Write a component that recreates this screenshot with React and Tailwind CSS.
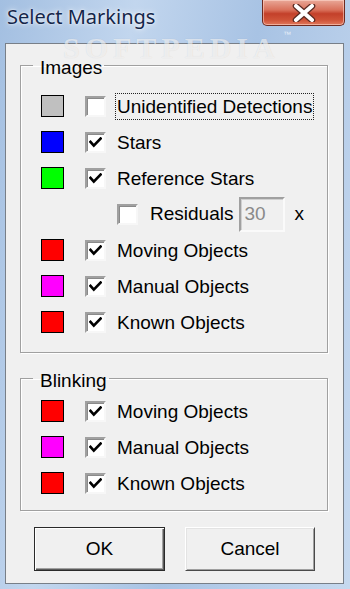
import React from "react";

function Check({ checked }) {
  return (
    <span className="w-[21px] h-[21px] shrink-0 bg-white border-2 border-t-[#a0a0a0] border-l-[#a0a0a0] border-b-[#f7f7f7] border-r-[#f7f7f7] shadow-[inset_1px_1px_0_#8a8a8a] flex items-center justify-center">
      {checked && (
        <svg width="13" height="11" viewBox="0 0 13 11">
          <path d="M1.5 5 L4.8 8.6 L11.6 1.6" fill="none" stroke="#000" strokeWidth="2.7" strokeLinecap="square" />
        </svg>
      )}
    </span>
  );
}

function Row({ color, checked, label, focus }) {
  return (
    <div className="h-[36px] flex items-center">
      <span className="w-[23px] h-[22px] shrink-0 border border-black" style={{ backgroundColor: color }} />
      <span className="ml-[21px] flex">
        <Check checked={checked} />
      </span>
      <span
        className={
          "ml-[9px] px-[1px] leading-[25px] border border-dotted whitespace-nowrap " +
          (focus ? "border-[#222]" : "border-transparent")
        }
      >
        {label}
      </span>
    </div>
  );
}

function Group({ title, children, className }) {
  return (
    <fieldset
      className={
        "border border-[#a0a0a0] shadow-[inset_1px_1px_0_#fff,1px_1px_0_#fff] ml-[14px] mr-[15px] pl-[20px] pr-0 " +
        className
      }
    >
      <legend className="-ml-[8px] pl-[7px] pr-[2px] pt-[5px] leading-[22px]">{title}</legend>
      {children}
    </fieldset>
  );
}

export default function App() {
  return (
    <div className="relative w-[350px] h-[589px] overflow-hidden flex flex-col bg-[linear-gradient(100deg,#a3bfe1_0%,#c2d6ee_30%,#a8c3e4_58%,#b9cfea_80%,#c6d9ef_100%)] font-['Liberation_Sans',Arial,sans-serif] text-[19px] text-black">
      {/* Title bar */}
      <div className="h-[43px] shrink-0 flex items-start justify-between">
        <div className="pl-[7px] pt-[4px] leading-[26px] text-[20px] text-[#14264a] font-['Noto_Sans','Open_Sans',sans-serif] [text-shadow:0_0_6px_rgba(255,255,255,0.95),0_0_2px_rgba(255,255,255,0.9)]">
          Select Markings
        </div>
        <div className="mr-[5px] w-[83px] h-[26px] rounded-b-[5px] border border-t-0 border-[#6e2a20] bg-[linear-gradient(180deg,#e9a898_0%,#d9705a_40%,#c3402a_55%,#cf5338_80%,#e0785c_100%)] shadow-[inset_0_0_0_1px_rgba(255,220,210,0.55)] flex items-center justify-center">
          <svg width="24" height="18" viewBox="0 0 24 18">
            <path d="M4 2 L20 16 M20 2 L4 16" stroke="#5a2a22" strokeWidth="6.5" strokeLinecap="round" />
            <path d="M4 2 L20 16 M20 2 L4 16" stroke="#fff" strokeWidth="4" strokeLinecap="round" />
          </svg>
        </div>
      </div>

      {/* Client area */}
      <div className="mx-[5px] mr-[6px] mb-[5px] flex-1 border border-[#787f88] bg-[#f0f0f0] flex flex-col">
        <Group title="Images" className="mt-[8px] pt-[9px] pb-[12px]">
          <Row color="#c0c0c0" checked={false} label="Unidentified Detections" focus />
          <Row color="#0000ff" checked label="Stars" />
          <Row color="#00ff00" checked label="Reference Stars" />
          <div className="h-[36px] flex items-center">
            <span className="ml-[76px] flex">
              <Check checked={false} />
            </span>
            <span className="ml-[12px] whitespace-nowrap">Residuals</span>
            <span className="ml-[6px] w-[46px] h-[35px] shrink-0 bg-[#f0f0f0] border-2 border-t-[#a0a0a0] border-l-[#a0a0a0] border-b-[#fafafa] border-r-[#fafafa] shadow-[inset_1px_1px_0_#d0d0d0] pl-[3px] flex items-center text-[#8a8a8a]">
              30
            </span>
            <span className="ml-[9px]">x</span>
          </div>
          <Row color="#ff0000" checked label="Moving Objects" />
          <Row color="#ff00ff" checked label="Manual Objects" />
          <Row color="#ff0000" checked label="Known Objects" />
        </Group>

        <Group title="Blinking" className="mt-[12px] pt-[1px] pb-[9px]">
          <Row color="#ff0000" checked label="Moving Objects" />
          <Row color="#ff00ff" checked label="Manual Objects" />
          <Row color="#ff0000" checked label="Known Objects" />
        </Group>

        <div className="mt-[16px] ml-[28px] flex gap-[20px]">
          <button className="w-[131px] h-[44px] border border-[#2a2a2a] bg-[#f0f0f0] shadow-[inset_1px_1px_0_#fff,inset_-1px_-1px_0_#5a5a5a,inset_-2px_-2px_0_#a0a0a0] flex items-center justify-center">
            OK
          </button>
          <button className="w-[130px] h-[44px] border border-t-[#fff] border-l-[#fff] border-b-[#4a4a4a] border-r-[#4a4a4a] bg-[#f0f0f0] shadow-[inset_1px_1px_0_#e3e3e3,inset_-1px_-1px_0_#a0a0a0] flex items-center justify-center">
            Cancel
          </button>
        </div>
      </div>

      {/* Watermark */}
      <div className="absolute left-[63px] top-[32px] text-[30px] leading-[32px] font-bold tracking-[5px] whitespace-nowrap text-white/60 [text-shadow:0_0_1px_rgba(0,0,0,0.12)] font-['Liberation_Serif',serif] pointer-events-none">
        SOFTPEDIA
      </div>
      <div className="absolute left-[283px] top-[30px] text-[8px] leading-[9px] text-white/70 pointer-events-none">™</div>
    </div>
  );
}
